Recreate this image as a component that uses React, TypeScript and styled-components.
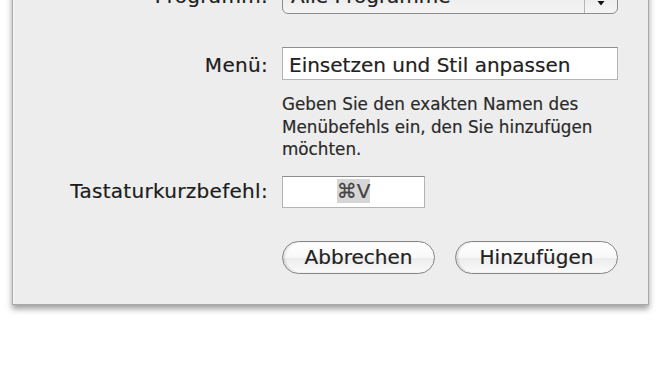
import React from "react";
import styled, { createGlobalStyle } from "styled-components";

const GlobalStyle = createGlobalStyle`
  html, body {
    margin: 0;
    padding: 0;
    background: #ffffff;
    overflow: hidden;
  }
  body {
    font-family: "DejaVu Sans", "Liberation Sans", sans-serif;
    color: #222;
    -webkit-text-stroke: 0.2px currentColor;
  }
`;

const Page = styled.div`
  width: 660px;
  height: 390px;
  overflow: hidden;
`;

const Panel = styled.div`
  width: 635px;
  margin: -42px 0 0 12px;
  padding: 22px 0 30px;
  background: #ededed;
  border: 1px solid #a9a9a9;
  border-top: none;
  box-shadow: 0 4px 6px rgba(0, 0, 0, 0.38), inset 1px 0 0 #f8f8f8;
`;

const Row = styled.div<{ $top?: number }>`
  display: grid;
  grid-template-columns: 255px 336px;
  column-gap: 14px;
  align-items: baseline;
  margin-top: ${(p) => p.$top ?? 0}px;
`;

const Label = styled.div`
  text-align: right;
  font-size: 20px;
  line-height: 24px;
  letter-spacing: 0.3px;
  color: #1c1c1c;
  white-space: nowrap;
`;

const Popup = styled.div`
  box-sizing: border-box;
  height: 34px;
  display: flex;
  border: 1px solid #8c8c8c;
  border-radius: 6px;
  background: linear-gradient(#ffffff, #f7f7f7 50%, #ececec 51%, #f5f5f5);
  font-size: 20px;
  line-height: 24px;
`;

const PopupText = styled.div`
  flex: 1;
  padding: 3px 8px 0;
`;

const PopupArrow = styled.div`
  width: 32px;
  border-left: 1px solid #b5b5b5;
  display: flex;
  align-items: center;
  justify-content: center;
`;

const Field = styled.div<{ $width?: number; $pad?: number; $center?: boolean }>`
  box-sizing: border-box;
  width: ${(p) => (p.$width ? `${p.$width}px` : "100%")};
  height: ${(p) => (p.$width ? 32 : 33)}px;
  padding: ${(p) => p.$pad ?? 5}px 6px 0;
  background: #fff;
  border: 1px solid #b4b4b4;
  border-top-color: #8e8e8e;
  font-size: 20px;
  line-height: 24px;
  color: #222;
  text-align: ${(p) => (p.$center ? "center" : "left")};
  white-space: nowrap;
`;

const Selection = styled.span`
  background: #d6d6d6;
  color: #444;
`;

const Help = styled.div`
  font-size: 16.8px;
  line-height: 22.5px;
  color: #2a2a2a;
`;

const ButtonBar = styled.div`
  display: flex;
  gap: 20px;
`;

const Button = styled.button<{ $width: number }>`
  box-sizing: border-box;
  width: ${(p) => p.$width}px;
  height: 33px;
  padding: 0;
  border: 1px solid #858585;
  border-radius: 17px;
  background: linear-gradient(#ffffff, #f8f8f8 50%, #ececec 52%, #fafafa);
  box-shadow: inset 2px 0 2px rgba(0, 0, 0, 0.12);
  font-family: "DejaVu Sans", "Liberation Sans", sans-serif;
  font-size: 20px;
  color: #222;
  -webkit-text-stroke: 0.2px currentColor;
`;

const ArrowIcon = () => (
  <svg width="10" height="26" viewBox="0 0 10 26">
    <path d="M1 7 L5 2 L9 7 Z" fill="#111" />
    <path d="M1.5 17 L5 21.5 L8.5 17 Z" fill="#111" />
  </svg>
);

export default function App() {
  return (
    <Page>
      <GlobalStyle />
      <Panel>
        <Row>
          <Label>Programm:</Label>
          <Popup>
            <PopupText>Alle Programme</PopupText>
            <PopupArrow>
              <ArrowIcon />
            </PopupArrow>
          </Popup>
        </Row>
        <Row $top={33}>
          <Label>Menü:</Label>
          <Field>Einsetzen und Stil anpassen</Field>
        </Row>
        <Row $top={13}>
          <div />
          <Help>
            Geben Sie den exakten Namen des
            <br />
            Menübefehls ein, den Sie hinzufügen
            <br />
            möchten.
          </Help>
        </Row>
        <Row $top={15}>
          <Label>Tastaturkurzbefehl:</Label>
          <Field $width={143} $pad={2} $center>
            <Selection>⌘V</Selection>
          </Field>
        </Row>
        <Row $top={33}>
          <div />
          <ButtonBar>
            <Button $width={153}>Abbrechen</Button>
            <Button $width={163}>Hinzufügen</Button>
          </ButtonBar>
        </Row>
      </Panel>
    </Page>
  );
}
